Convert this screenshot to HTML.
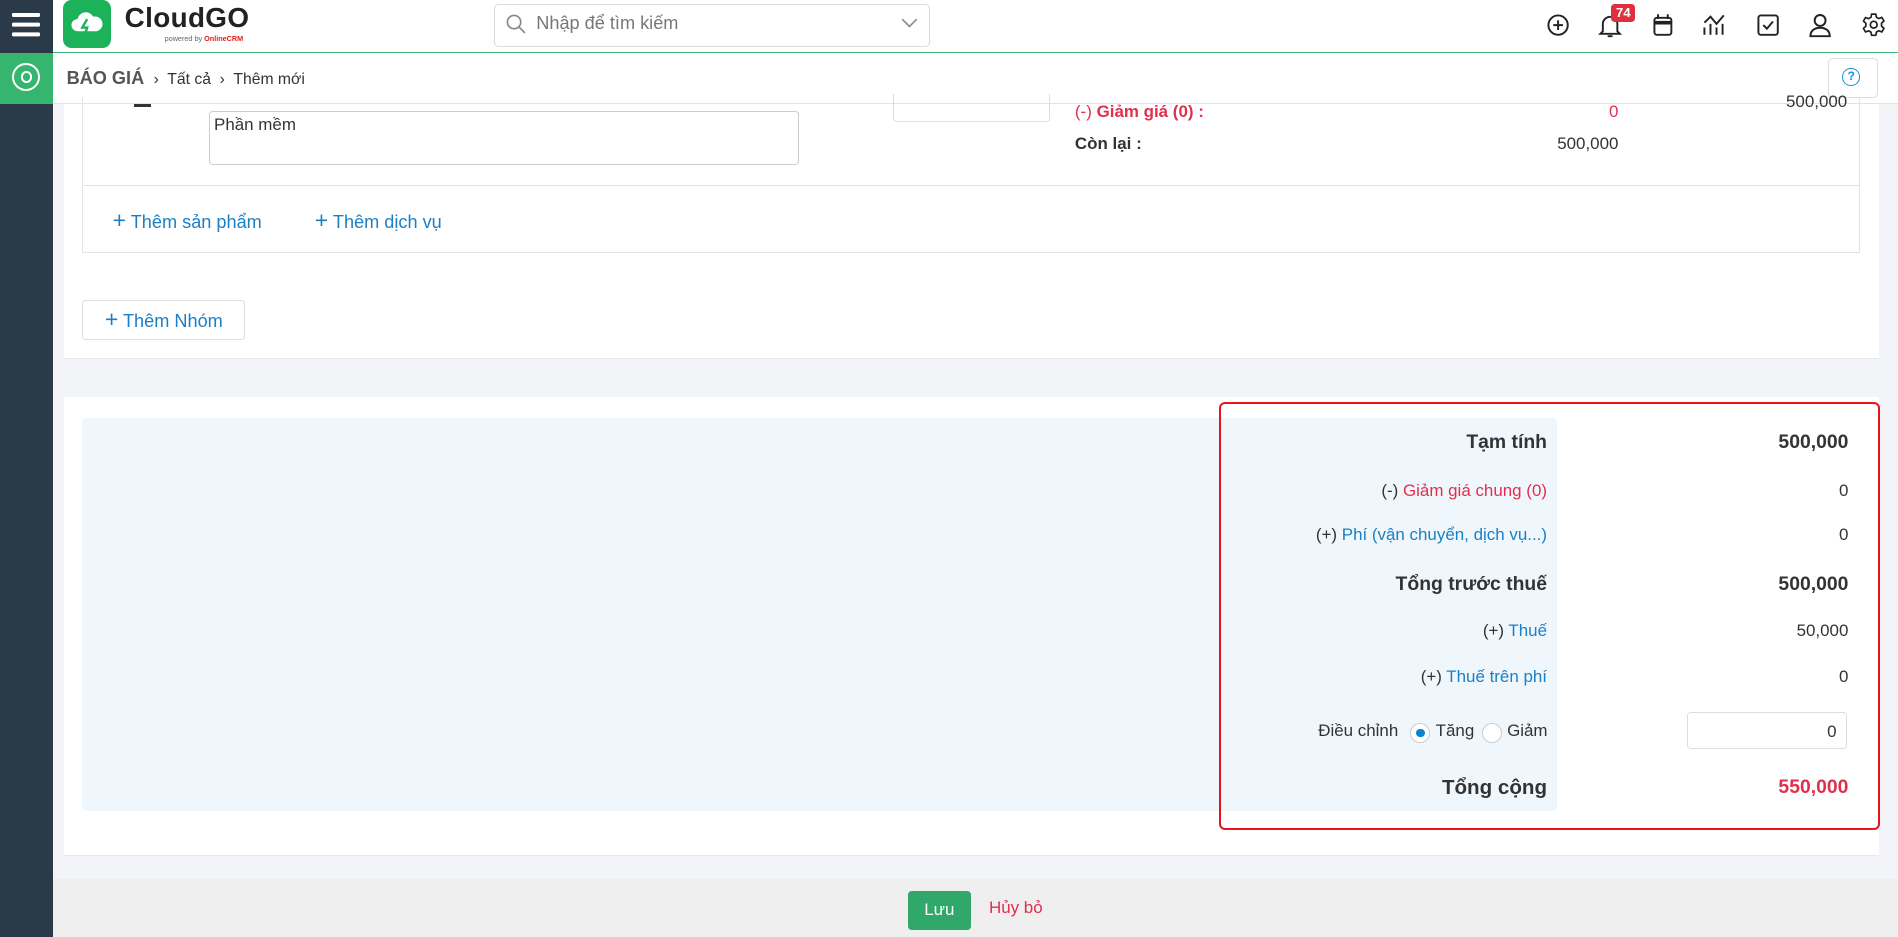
<!DOCTYPE html>
<html><head><meta charset="utf-8"><style>
html,body{margin:0;padding:0;}
html{width:1898px;height:937px;overflow:hidden;background:#f2f4f7;}
body{zoom:1.2105;width:1568px;height:774px;position:relative;font-family:"Liberation Sans",sans-serif;color:#333;overflow:hidden;background:#f2f4f7;}
.a{position:absolute;}
.blue{color:#1b7fc4;}
.red{color:#e0304e;}
.r{text-align:right;}
</style></head><body>
<!-- sidebar -->
<div class="a" style="left:0;top:0;width:44px;height:774px;background:#2b3a49;"></div>
<div class="a" style="left:10px;top:11px;width:23px;height:3px;background:#fff;border-radius:1px;box-shadow:0 8px 0 #fff,0 16px 0 #fff;"></div>
<div class="a" style="left:0;top:44px;width:44px;height:42px;background:#35b56e;"></div>
<div class="a" style="left:10px;top:52px;width:20px;height:20px;border:2px solid #fff;border-radius:50%;"></div>
<div class="a" style="left:17px;top:59px;width:6px;height:6px;border:2px solid #fff;border-radius:50%;"></div>
<!-- header -->
<div class="a" style="left:44px;top:0;width:1524px;height:43px;background:#fff;border-bottom:1px solid #3cb878;"></div>
<div class="a" style="left:52px;top:0;width:40px;height:40px;background:#1bb25a;border-radius:7px;"></div>
<svg class="a" style="left:57px;top:6px" width="30" height="28" viewBox="0 0 30 28"><path d="M7 20a5 5 0 0 1 0-10a7 7 0 0 1 13-2a5 5 0 0 1 3 12z" fill="#fff"/><path d="M15 10l-4 7h4l-2 6" stroke="#1bb25a" stroke-width="2" fill="none"/></svg>
<div class="a" style="left:103px;top:2px;font-size:23px;font-weight:bold;color:#222;letter-spacing:0.3px;">CloudGO</div>
<div class="a" style="left:136px;top:28px;font-size:6px;color:#666;">powered by <span style="color:#d22;font-weight:bold">OnlineCRM</span></div>
<div class="a" style="left:408px;top:3px;width:359px;height:34px;border:1px solid #dcdcdc;border-radius:4px;background:#fff;"></div>
<svg class="a" style="left:417px;top:11px" width="18" height="18" viewBox="0 0 18 18"><circle cx="7.5" cy="7.5" r="5.5" stroke="#888" stroke-width="1.4" fill="none"/><path d="M11.5 11.5l5 5" stroke="#888" stroke-width="1.4"/></svg>
<div class="a" style="left:443px;top:11px;font-size:15px;color:#777;">Nhập để tìm kiếm</div>
<svg class="a" style="left:744px;top:15px" width="14" height="9"><path d="M1 1l6 6 6-6" stroke="#888" stroke-width="1.3" fill="none"/></svg>
<!-- right icons -->
<svg class="a" style="left:1277px;top:11px" width="20" height="20" viewBox="0 0 20 20"><circle cx="10" cy="10" r="8" stroke="#222" stroke-width="1.6" fill="none"/><path d="M10 6v8M6 10h8" stroke="#222" stroke-width="1.6"/></svg>
<svg class="a" style="left:1320px;top:10px" width="20" height="22" viewBox="0 0 20 22"><path d="M4 16V10a6 6 0 0 1 12 0v6l2 2H2z" stroke="#222" stroke-width="1.6" fill="none"/><path d="M8 20h4" stroke="#222" stroke-width="1.6"/></svg>
<div class="a" style="left:1331px;top:3px;width:20px;height:15px;background:#e0303f;color:#fff;font-size:11px;font-weight:bold;text-align:center;line-height:15px;border-radius:3px;">74</div>
<svg class="a" style="left:1365px;top:11px" width="18" height="20" viewBox="0 0 18 20"><rect x="2" y="4" width="14" height="14" rx="2" stroke="#222" stroke-width="1.6" fill="none"/><path d="M2 8h14" stroke="#222" stroke-width="3"/><path d="M5 1v4M13 1v4" stroke="#222" stroke-width="1.6"/></svg>
<svg class="a" style="left:1406px;top:11px" width="22" height="20" viewBox="0 0 22 20"><path d="M2 18v-6M7 18v-9M12 18v-6M17 18v-9" stroke="#222" stroke-width="1.6"/><path d="M2 8l5-5 5 6 6-7" stroke="#222" stroke-width="1.6" fill="none"/></svg>
<svg class="a" style="left:1451px;top:11px" width="20" height="20" viewBox="0 0 20 20"><rect x="2" y="2" width="16" height="16" rx="2" stroke="#222" stroke-width="1.6" fill="none"/><path d="M6 10l3 3 5-6" stroke="#222" stroke-width="1.6" fill="none"/></svg>
<svg class="a" style="left:1494px;top:10px" width="20" height="22" viewBox="0 0 20 22"><circle cx="10" cy="7" r="4.5" stroke="#222" stroke-width="1.6" fill="none"/><path d="M2 20c0-5 4-7 8-7s8 2 8 7z" stroke="#222" stroke-width="1.6" fill="none"/></svg>
<svg class="a" style="left:1537px;top:10px" width="21" height="21" viewBox="0 0 24 24"><path d="M10 2h4l.6 3 2.2 1.2 2.9-1.1 2 3.4-2.3 2v2.9l2.3 2-2 3.4-2.9-1.1-2.2 1.2L14 22h-4l-.6-3-2.2-1.2-2.9 1.1-2-3.4 2.3-2v-2.9l-2.3-2 2-3.4 2.9 1.1L9.4 5z" stroke="#222" stroke-width="1.6" fill="none" stroke-linejoin="round"/><circle cx="12" cy="12" r="3.2" stroke="#222" stroke-width="1.6" fill="none"/></svg>
<!-- breadcrumb -->
<div class="a" style="left:44px;top:44px;width:1524px;height:41px;background:#fff;border-bottom:1px solid #e3e3e3;"></div>
<div class="a" style="left:55px;top:56px;font-size:15px;font-weight:bold;color:#555;">BÁO GIÁ <span style="font-weight:normal;font-size:13px;color:#333">&nbsp;›&nbsp; Tất cả &nbsp;›&nbsp; Thêm mới</span></div>
<div class="a" style="left:1510px;top:48px;width:40px;height:31px;border:1px solid #ddd;border-radius:4px;background:#fff;"></div>
<div class="a" style="left:1522px;top:56px;width:13px;height:13px;border:1.6px solid #1b8fd6;border-radius:50%;font-size:10px;font-weight:bold;color:#1b8fd6;text-align:center;line-height:13px;">?</div>
<!-- card 1 -->
<div class="a" style="left:53px;top:86px;width:1499px;height:210px;background:#fff;border-bottom:1px solid #e6e8ea;"></div>
<div class="a" style="left:68px;top:80px;width:1467px;height:128px;border:1px solid #e3e3e3;border-top:none;"></div>
<div class="a" style="left:68px;top:153px;width:1468px;height:1px;background:#e3e3e3;"></div>
<div class="a" style="left:111px;top:86px;width:14px;height:2px;background:#333;"></div>
<div class="a" style="left:173px;top:92px;width:487px;height:44px;border:1px solid #ccc;border-radius:3px;font-size:14px;padding:2px 3px;box-sizing:border-box;">Phần mềm</div>
<div class="a" style="left:738px;top:78px;width:128px;height:22px;border:1px solid #ddd;border-top:none;border-radius:0 0 3px 3px;"></div>
<div class="a red" style="left:888px;top:84px;font-size:14px;"><span style="color:#e0304e">(-)</span> <b>Giảm giá (0) :</b></div>
<div class="a red r" style="left:1237px;top:84px;width:100px;font-size:14px;">0</div>
<div class="a" style="left:888px;top:111px;font-size:14px;font-weight:bold;">Còn lại :</div>
<div class="a r" style="left:1237px;top:111px;width:100px;font-size:14px;">500,000</div>
<div class="a r" style="left:1426px;top:76px;width:100px;font-size:14px;">500,000</div>
<div class="a blue" style="left:93px;top:171px;font-size:15px;"><span style="font-size:19px;font-weight:300">+</span> Thêm sản phẩm</div>
<div class="a blue" style="left:260px;top:171px;font-size:15px;"><span style="font-size:19px;font-weight:300">+</span> Thêm dịch vụ</div>
<div class="a blue" style="left:68px;top:248px;width:133px;height:31px;border:1px solid #ddd;border-radius:3px;font-size:15px;line-height:31px;text-align:center;"><span style="font-size:19px">+</span> Thêm Nhóm</div>
<!-- card 2 -->
<div class="a" style="left:53px;top:328px;width:1499px;height:378px;background:#fff;border-bottom:1px solid #e6e8ea;"></div>
<div class="a" style="left:68px;top:345px;width:1218px;height:325px;background:#f0f7fc;border-radius:4px;"></div>
<div class="a" style="left:1007px;top:332px;width:543px;height:350px;border:2px solid #e8141c;border-radius:5px;"></div>
<div class="a r" style="left:1000px;top:356px;width:278px;font-size:16px;font-weight:bold;">Tạm tính</div>
<div class="a r" style="left:1400px;top:356px;width:127px;font-size:16px;font-weight:bold;">500,000</div>
<div class="a r" style="left:1000px;top:397px;width:278px;font-size:14px;">(-) <span class="red">Giảm giá chung (0)</span></div>
<div class="a r" style="left:1400px;top:397px;width:127px;font-size:14px;">0</div>
<div class="a r" style="left:1000px;top:434px;width:278px;font-size:14px;">(+) <span class="blue">Phí (vận chuyển, dịch vụ...)</span></div>
<div class="a r" style="left:1400px;top:434px;width:127px;font-size:14px;">0</div>
<div class="a r" style="left:1000px;top:473px;width:278px;font-size:16px;font-weight:bold;">Tổng trước thuế</div>
<div class="a r" style="left:1400px;top:473px;width:127px;font-size:16px;font-weight:bold;">500,000</div>
<div class="a r" style="left:1000px;top:513px;width:278px;font-size:14px;">(+) <span class="blue">Thuế</span></div>
<div class="a r" style="left:1400px;top:513px;width:127px;font-size:14px;">50,000</div>
<div class="a r" style="left:1000px;top:551px;width:278px;font-size:14px;">(+) <span class="blue">Thuế trên phí</span></div>
<div class="a r" style="left:1400px;top:551px;width:127px;font-size:14px;">0</div>
<div class="a" style="left:1089px;top:596px;font-size:14px;">Điều chỉnh</div>
<div class="a" style="left:1165px;top:597px;width:15px;height:15px;border:1px solid #ccc;border-radius:50%;background:#fff;"></div>
<div class="a" style="left:1170px;top:602px;width:7px;height:7px;border-radius:50%;background:#0a84d0;"></div>
<div class="a" style="left:1186px;top:596px;font-size:14px;">Tăng</div>
<div class="a" style="left:1224px;top:597px;width:15px;height:15px;border:1px solid #ccc;border-radius:50%;background:#fff;"></div>
<div class="a" style="left:1245px;top:596px;font-size:14px;">Giảm</div>
<div class="a r" style="left:1394px;top:588px;width:132px;height:31px;border:1px solid #ddd;border-radius:3px;font-size:14px;line-height:31px;padding-right:8px;box-sizing:border-box;background:#fff;">0</div>
<div class="a r" style="left:1000px;top:641px;width:278px;font-size:17px;font-weight:bold;">Tổng cộng</div>
<div class="a r red" style="left:1400px;top:641px;width:127px;font-size:16px;font-weight:bold;">550,000</div>
<!-- footer -->
<div class="a" style="left:44px;top:726px;width:1524px;height:48px;background:#efefef;"></div>
<div class="a" style="left:750px;top:736px;width:52px;height:32px;background:#2fa86a;border-radius:3px;color:#fff;font-size:14px;line-height:32px;text-align:center;">Lưu</div>
<div class="a red" style="left:817px;top:742px;font-size:14px;">Hủy bỏ</div>
</body></html>
